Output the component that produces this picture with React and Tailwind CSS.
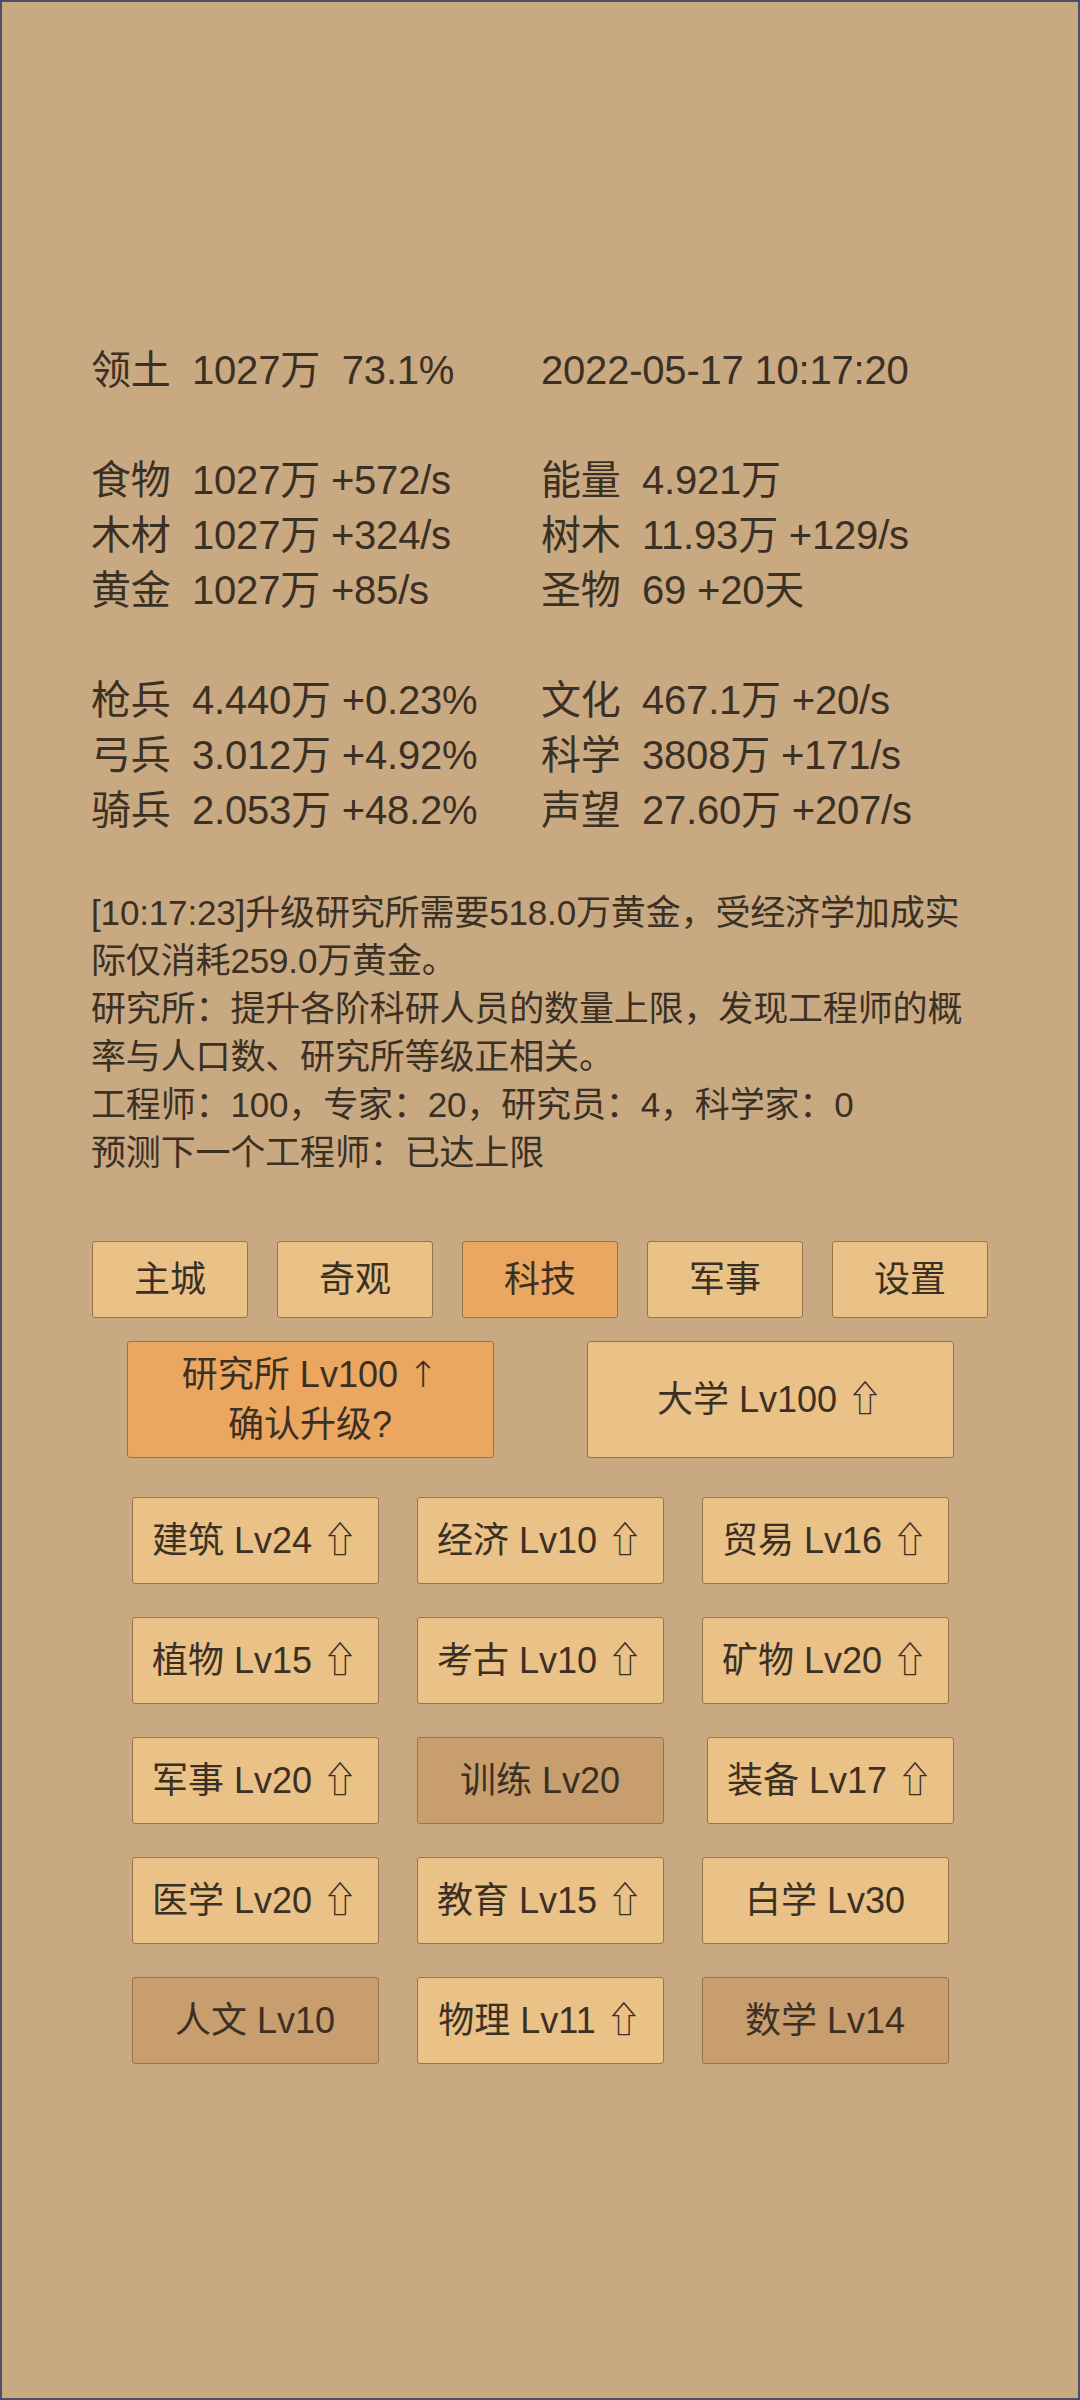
export default function App() {
  const font = { fontFamily: '"Liberation Sans", "Noto Sans CJK SC", "DejaVu Sans", sans-serif' };

  const stats = [
    [["领土", "1027万  73.1%"], ["", "2022-05-17 10:17:20"]],
    null,
    [["食物", "1027万 +572/s"], ["能量", "4.921万"]],
    [["木材", "1027万 +324/s"], ["树木", "11.93万 +129/s"]],
    [["黄金", "1027万 +85/s"], ["圣物", "69 +20天"]],
    null,
    [["枪兵", "4.440万 +0.23%"], ["文化", "467.1万 +20/s"]],
    [["弓兵", "3.012万 +4.92%"], ["科学", "3808万 +171/s"]],
    [["骑兵", "2.053万 +48.2%"], ["声望", "27.60万 +207/s"]],
  ];

  const nav = ["主城", "奇观", "科技", "军事", "设置"];

  const techs = [
    [["建筑 Lv24", "up"], ["经济 Lv10", "up"], ["贸易 Lv16", "up"]],
    [["植物 Lv15", "up"], ["考古 Lv10", "up"], ["矿物 Lv20", "up"]],
    [["军事 Lv20", "up"], ["训练 Lv20", "dark"], ["装备 Lv17", "up"]],
    [["医学 Lv20", "up"], ["教育 Lv15", "up"], ["白学 Lv30", "light"]],
    [["人文 Lv10", "dark"], ["物理 Lv11", "up"], ["数学 Lv14", "dark"]],
  ];

  const btn = "flex items-center justify-center rounded-[3px] border border-[#9a7245] text-[36px] text-[#3b3024]";

  return (
    <div
      className="box-border h-[2400px] w-[1080px] border-2 border-[#4b5068] bg-[#c9a982] text-[#3b3024]"
      style={font}
    >
      <div className="pl-[89px] pr-[90px] pt-[341px]">
        {/* Stats */}
        <div className="text-[40px] leading-[55px] tracking-[-0.2px]">
          {stats.map((row, i) =>
            row ? (
              <div key={i} className="grid grid-cols-[450px_1fr]">
                {row.map(([label, value], j) => (
                  <div key={j} className="flex whitespace-pre">
                    {label && <span className="w-[101px] shrink-0">{label}</span>}
                    <span>{value}</span>
                  </div>
                ))}
              </div>
            ) : (
              <div key={i} className="h-[55px]" />
            )
          )}
        </div>

        {/* Log */}
        <div className="mt-[51px] w-[898px] text-[35px] leading-[48px] tracking-[-0.15px]">
          <p>[10:17:23]升级研究所需要518.0万黄金，受经济学加成实际仅消耗259.0万黄金。</p>
          <p>研究所：提升各阶科研人员的数量上限，发现工程师的概率与人口数、研究所等级正相关。</p>
          <p>工程师：100，专家：20，研究员：4，科学家：0</p>
          <p>预测下一个工程师：已达上限</p>
        </div>
      </div>

      {/* Nav */}
      <div className="mt-[64px] flex justify-center gap-[29px]">
        {nav.map((n) => (
          <div
            key={n}
            className={`${btn} h-[77px] w-[156px] ${n === "科技" ? "bg-[#eba660]" : "bg-[#eac187]"}`}
          >
            {n}
          </div>
        ))}
      </div>

      {/* Buildings */}
      <div className="mt-[23px] flex justify-center gap-[93px]">
        <div className={`${btn} h-[117px] w-[367px] flex-col bg-[#eba660] leading-[50px]`}>
          <span>
            研究所 Lv100 <span className="font-['DejaVu_Sans'] font-light">↑</span>
          </span>
          <span>确认升级?</span>
        </div>
        <div className={`${btn} h-[117px] w-[367px] bg-[#eac187]`}>大学 Lv100 ⇧</div>
      </div>

      {/* Tech grid */}
      <div className="mt-[39px] flex flex-col items-center gap-[33px]">
        {techs.map((row, i) => (
          <div key={i} className="flex gap-[38px]">
            {row.map(([label, kind], j) => (
              <div
                key={label}
                className={`${btn} h-[87px] w-[247px] ${kind === "dark" ? "bg-[#c89e6e]" : "bg-[#eac187]"} ${
                  i === 2 && j === 2 ? "ml-[5px] -mr-[5px]" : ""
                }`}
              >
                {label}
                {kind === "up" ? " ⇧" : ""}
              </div>
            ))}
          </div>
        ))}
      </div>
    </div>
  );
}
